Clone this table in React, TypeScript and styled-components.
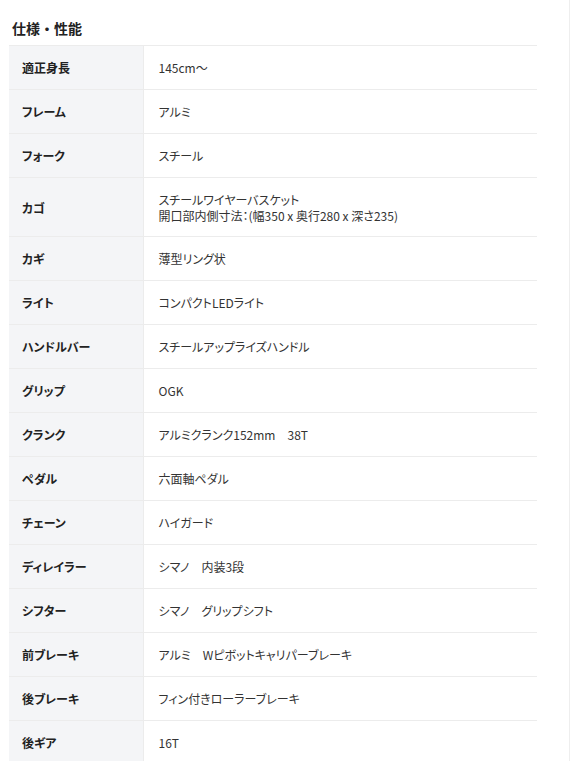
import React from 'react'
import styled, { createGlobalStyle } from 'styled-components'

interface Spec {
  label: string
  value: string[]
}

const specs: Spec[] = [
  { label: '適正身長', value: ['145cm～'] },
  { label: 'フレーム', value: ['アルミ'] },
  { label: 'フォーク', value: ['スチール'] },
  { label: 'カゴ', value: ['スチールワイヤーバスケット', '開口部内側寸法：(幅350 x 奥行280 x 深さ235)'] },
  { label: 'カギ', value: ['薄型リング状'] },
  { label: 'ライト', value: ['コンパクトLEDライト'] },
  { label: 'ハンドルバー', value: ['スチールアップライズハンドル'] },
  { label: 'グリップ', value: ['OGK'] },
  { label: 'クランク', value: ['アルミクランク152mm　38T'] },
  { label: 'ペダル', value: ['六面軸ペダル'] },
  { label: 'チェーン', value: ['ハイガード'] },
  { label: 'ディレイラー', value: ['シマノ　内装3段'] },
  { label: 'シフター', value: ['シマノ　グリップシフト'] },
  { label: '前ブレーキ', value: ['アルミ　Wピボットキャリパーブレーキ'] },
  { label: '後ブレーキ', value: ['フィン付きローラーブレーキ'] },
  { label: '後ギア', value: ['16T'] },
]

const GlobalStyle = createGlobalStyle`
  html, body {
    margin: 0;
    padding: 0;
    background: #FFFFFF;
    font-family: 'Noto Sans CJK JP', 'Noto Sans', sans-serif;
    font-feature-settings: 'palt';
    color: #333333;
  }
`

const Page = styled.div`
  width: 570px;
  min-height: 761px;
  border-right: 1px solid #EEEEEE;
  padding: 18px 0 0 9px;
  box-sizing: border-box;
`

const Heading = styled.h2`
  margin: 0 0 7px 3px;
  font-size: 14px;
  line-height: 20px;
  font-weight: 700;
  font-feature-settings: normal;
  color: #222222;
`

const SpecTable = styled.table`
  width: 528px;
  border-collapse: collapse;
  border-top: 1px solid #ECECEC;
  font-size: 12px;
`

const Row = styled.tr`
  border-bottom: 1px solid #ECECEC;
`

const Label = styled.th`
  width: 134px;
  box-sizing: border-box;
  padding: 14px 13px 13px;
  background: #F4F5F7;
  text-align: left;
  vertical-align: middle;
  font-weight: 700;
  line-height: 16px;
  color: #222222;
  border-right: 1px solid #ECECEC;
`

const Value = styled.td`
  padding: 14px 15px 13px;
  line-height: 16px;
  vertical-align: middle;
  color: #333333;
  white-space: pre;
`

const Line = styled.div`
  &:not(:only-child) {
    line-height: 15.5px;
  }
`

const App: React.FC = () => {
  return (
    <Page>
      <GlobalStyle />
      <Heading>仕様・性能</Heading>
      <SpecTable>
        <tbody>
          {specs.map((spec) => (
            <Row key={spec.label}>
              <Label>{spec.label}</Label>
              <Value>
                {spec.value.map((line) => (
                  <Line key={line}>{line}</Line>
                ))}
              </Value>
            </Row>
          ))}
        </tbody>
      </SpecTable>
    </Page>
  )
}

export default App
